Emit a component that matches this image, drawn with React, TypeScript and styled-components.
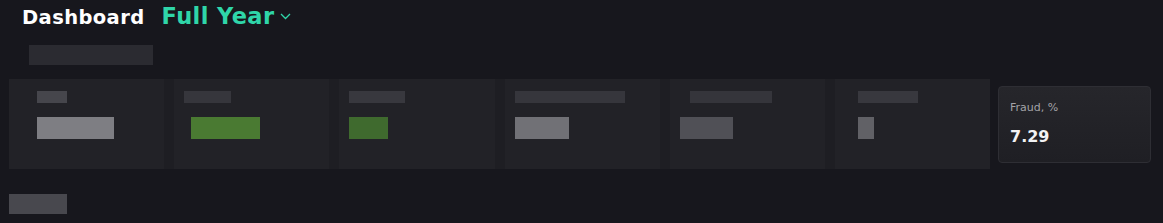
import React from "react";
import styled, { createGlobalStyle } from "styled-components";

const GlobalStyle = createGlobalStyle`
	html, body {
		margin: 0;
		padding: 0;
		background: #17171d;
	}
	body {
		font-family: "DejaVu Sans", "Noto Sans", sans-serif;
		color: #ffffff;
	}
`;

const Page = styled.div`
	width: 1163px;
	height: 223px;
	padding: 3px 12px 0 9px;
	box-sizing: border-box;
	background: #17171d;
	overflow: hidden;
`;

const Header = styled.div`
	display: flex;
	align-items: baseline;
	gap: 17px;
	height: 31px;
	padding-left: 13px;
`;

const Title = styled.h1`
	margin: 0;
	font-size: 19.5px;
	font-weight: 700;
	letter-spacing: 0.4px;
	color: #ffffff;
`;

const PeriodButton = styled.button`
	display: flex;
	align-items: center;
	gap: 6px;
	padding: 0;
	border: none;
	background: none;
	font-family: inherit;
	font-size: 22.5px;
	font-weight: 700;
	letter-spacing: 0.4px;
	color: #2fd6a9;
	cursor: pointer;
`;

/* Censored blocks */
const Blur = styled.div<{ width: number; height: number; tone: string }>`
	width: ${({ width }) => width}px;
	height: ${({ height }) => height}px;
	background: ${({ tone }) => tone};
`;

const Subtitle = styled(Blur)`
	margin: 11px 0 0 20px;
`;

const Row = styled.div`
	display: flex;
	align-items: center;
	gap: 8px;
	margin-top: 14px;
`;

const CensoredBand = styled.div`
	display: flex;
	gap: 10px;
	width: 981px;
	height: 90px;
	background: #1e1e23;
`;

const CensoredCard = styled.div`
	display: flex;
	flex: 1;
	flex-direction: column;
	gap: 14px;
	padding: 12px 10px 0;
	background: #222227;
`;

const FraudCard = styled.div`
	display: flex;
	flex-direction: column;
	gap: 13px;
	width: 153px;
	height: 77px;
	box-sizing: border-box;
	padding: 14px 11px 0;
	border: 1px solid #2e2e34;
	border-radius: 4px;
	background: linear-gradient(180deg, #26262b 0%, #1f1f24 100%);
`;

const CardLabel = styled.div`
	font-size: 11px;
	font-weight: 400;
	color: #a3a3a8;
`;

const CardValue = styled.div`
	font-size: 16px;
	font-weight: 700;
	color: #f2f2f4;
`;

const Footer = styled(Blur)`
	margin-top: 25px;
`;

interface CensoredItem {
	labelWidth: number;
	labelTone: string;
	labelOffset: number;
	valueWidth: number;
	valueTone: string;
	valueOffset: number;
}

const censored: CensoredItem[] = [
	{ labelWidth: 30, labelTone: "#46464c", labelOffset: 18, valueWidth: 77, valueTone: "#7e7e83", valueOffset: 18 },
	{ labelWidth: 47, labelTone: "#36363c", labelOffset: 0, valueWidth: 69, valueTone: "#4a7a32", valueOffset: 7 },
	{ labelWidth: 56, labelTone: "#38383e", labelOffset: 0, valueWidth: 39, valueTone: "#3f6a2e", valueOffset: 0 },
	{ labelWidth: 110, labelTone: "#36363c", labelOffset: 0, valueWidth: 54, valueTone: "#717176", valueOffset: 0 },
	{ labelWidth: 82, labelTone: "#35353b", labelOffset: 10, valueWidth: 53, valueTone: "#505056", valueOffset: 0 },
	{ labelWidth: 60, labelTone: "#38383e", labelOffset: 13, valueWidth: 16, valueTone: "#616166", valueOffset: 13 },
];

function Chevron() {
	return (
		<svg width="11" height="7" viewBox="0 0 11 7" fill="none">
			<path d="M1 1l4.5 4.5L10 1" stroke="#2fd6a9" strokeWidth="1.3" />
		</svg>
	);
}

export default function App() {
	return (
		<React.Fragment>
			<GlobalStyle />
			<Page>
				<Header>
					<Title>Dashboard</Title>
					<PeriodButton>
						Full Year
						<Chevron />
					</PeriodButton>
				</Header>
				<Subtitle width={124} height={20} tone="#2b2b31" />
				<Row>
					<CensoredBand>
						{censored.map((item, index) => (
							<CensoredCard key={index}>
								<Blur width={item.labelWidth} height={12} tone={item.labelTone} style={{ marginLeft: item.labelOffset }} />
								<Blur width={item.valueWidth} height={22} tone={item.valueTone} style={{ marginLeft: item.valueOffset }} />
							</CensoredCard>
						))}
					</CensoredBand>
					<FraudCard>
						<CardLabel>Fraud, %</CardLabel>
						<CardValue>7.29</CardValue>
					</FraudCard>
				</Row>
				<Footer width={58} height={20} tone="#48484e" />
			</Page>
		</React.Fragment>
	);
}
